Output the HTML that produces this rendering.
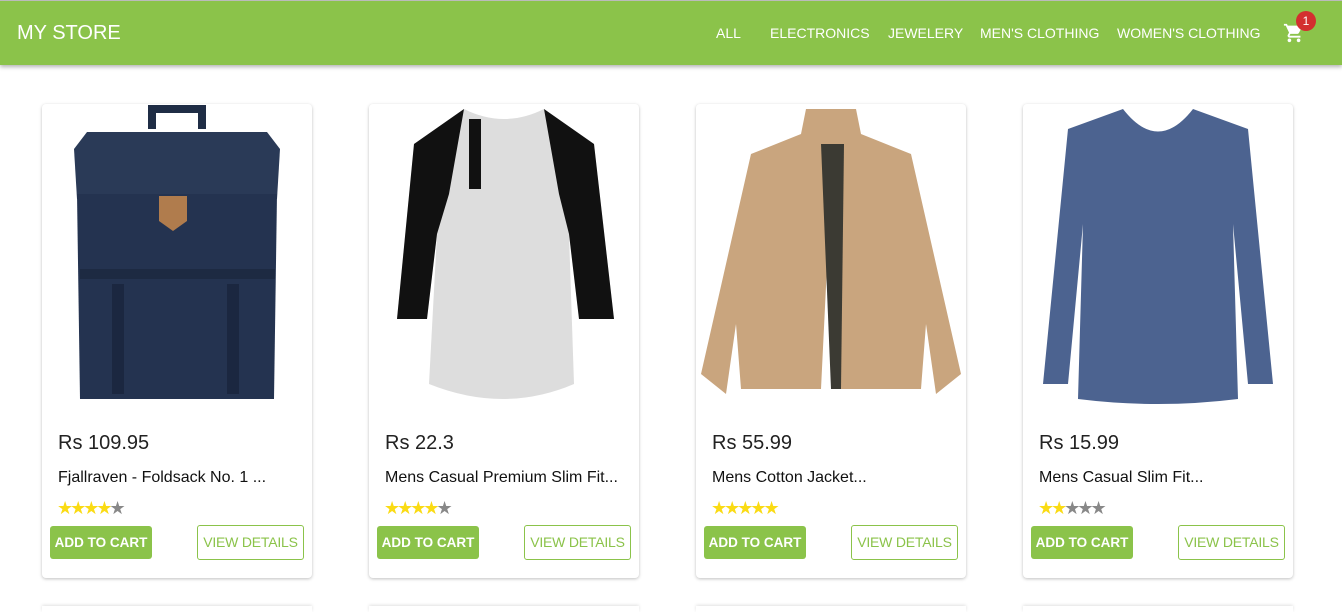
<!DOCTYPE html>
<html><head><style>
*{box-sizing:border-box;margin:0;padding:0}
body{width:1342px;height:609px;overflow:hidden;background:#fff;font-family:"Liberation Sans",Arial,sans-serif;position:relative}
.hdr{position:absolute;left:0;top:0;width:1342px;height:65px;background:#8bc34a;box-shadow:0 2px 4px rgba(0,0,0,.3);border-top:1px solid #bbb}
.logo{position:absolute;left:17px;top:22px;color:#fff;font-size:20px}
.nav{position:absolute;top:25px;color:#fff;font-size:14px}
.cart{position:absolute;left:1283px;top:22px}
.badge{position:absolute;left:1296px;top:11px;width:20px;height:20px;border-radius:50%;background:#d32f2f;color:#fff;font-size:12px;text-align:center;line-height:20px}
.card{position:absolute;top:104px;width:270px;height:474px;background:#fff;border-radius:4px;box-shadow:0 1px 3px rgba(0,0,0,.25)}
.img{position:absolute;left:0;top:0;width:270px;height:302px}
.price{position:absolute;left:16px;top:328px;font-size:20px;color:#222}
.title{position:absolute;left:16px;top:365px;font-size:16px;color:#111}
.stars{position:absolute;left:15px;top:394px;font-size:18px;letter-spacing:-3px}
.y{color:#fadb14}.g{color:#888}
.add{position:absolute;left:8px;top:422px;width:102px;height:33px;background:#8bc34a;color:#fff;font-weight:bold;font-size:13.5px;border-radius:3px;text-align:center;line-height:33px}
.view{position:absolute;left:155px;top:421px;width:107px;height:35px;border:1px solid #8bc34a;color:#8bc34a;font-size:14px;border-radius:3px;text-align:center;line-height:33px;letter-spacing:-.2px}
.next{position:absolute;top:606px;width:270px;height:6px;box-shadow:0 -1px 3px rgba(0,0,0,.12)}
</style></head><body>
<div class="hdr"></div>
<div class="logo">MY STORE</div>
<div class="nav" style="left:716px">ALL</div>
<div class="nav" style="left:770px">ELECTRONICS</div>
<div class="nav" style="left:888px">JEWELERY</div>
<div class="nav" style="left:980px">MEN'S CLOTHING</div>
<div class="nav" style="left:1117px">WOMEN'S CLOTHING</div>
<svg class="cart" width="22" height="22" viewBox="0 0 24 24"><path fill="#fff" d="M7 18c-1.1 0-2 .9-2 2s.9 2 2 2 2-.9 2-2-.9-2-2-2zM1 2v2h2l3.6 7.590-1.35 2.45C5.09 14.32 5 14.65 5 15c0 1.1.9 2 2 2h12v-2H7.42c-.14 0-.25-.11-.25-.25l.03-.12.9-1.630h7.45c.75 0 1.41-.41 1.75-1.030l3.58-6.49A1 1 0 0 0 20 4H5.21l-.94-2H1zm16 16c-1.1 0-2 .9-2 2s.9 2 2 2 2-.9 2-2-.9-2-2-2z"/></svg>
<div class="badge">1</div>

<div class="card" style="left:42px">
<svg class="img" viewBox="0 0 270 302"><path d="M110 25 V5 h50 v20" fill="none" stroke="#1f2d45" stroke-width="8"/><path d="M32 45 L45 28 H225 L238 45 L235 95 H35Z" fill="#2a3a57"/><path d="M35 90 H235 L232 295 H38Z" fill="#243350"/><rect x="38" y="165" width="195" height="10" fill="#1d2a42"/><rect x="70" y="180" width="12" height="110" fill="#1b2740"/><rect x="185" y="180" width="12" height="110" fill="#1b2740"/><path d="M117 92 h28 v25 l-14 10 -14 -10z" fill="#b07c4d"/></svg>
<div class="price">Rs 109.95</div><div class="title">Fjallraven - Foldsack No. 1 ...</div>
<div class="stars"><span class="y">★★★★</span><span class="g">★</span></div>
<div class="add">ADD TO CART</div><div class="view">VIEW DETAILS</div></div>

<div class="card" style="left:369px">
<svg class="img" viewBox="0 0 270 302"><path d="M95 5 Q135 25 175 5 L225 40 L245 215 H210 L200 130 L205 280 Q135 310 60 280 L68 130 L58 215 H28 L45 40Z" fill="#ddd"/><path d="M95 5 L45 40 L28 215 H58 L68 130 L80 90Z" fill="#111"/><path d="M175 5 L225 40 L245 215 H210 L200 130 L190 90Z" fill="#111"/><rect x="100" y="15" width="12" height="70" fill="#111"/></svg>
<div class="price">Rs 22.3</div><div class="title">Mens Casual Premium Slim Fit...</div>
<div class="stars"><span class="y">★★★★</span><span class="g">★</span></div>
<div class="add">ADD TO CART</div><div class="view">VIEW DETAILS</div></div>

<div class="card" style="left:696px">
<svg class="img" viewBox="0 0 270 302"><path d="M110 5 H160 L165 30 L215 50 L265 270 L240 290 L230 220 L225 285 H145 L135 80 L125 285 H45 L40 220 L30 290 L5 270 L55 50 L105 30Z" fill="#c9a57e"/><path d="M125 40 L135 285 H145 L148 40Z" fill="#3b3a33"/></svg>
<div class="price">Rs 55.99</div><div class="title">Mens Cotton Jacket...</div>
<div class="stars"><span class="y">★★★★★</span></div>
<div class="add">ADD TO CART</div><div class="view">VIEW DETAILS</div></div>

<div class="card" style="left:1023px">
<svg class="img" viewBox="0 0 270 302"><path d="M100 5 Q135 50 170 5 L225 25 L250 280 H225 L210 120 L215 295 Q135 305 55 295 L60 120 L45 280 H20 L45 25Z" fill="#4c6390"/></svg>
<div class="price">Rs 15.99</div><div class="title">Mens Casual Slim Fit...</div>
<div class="stars"><span class="y">★★</span><span class="g">★★★</span></div>
<div class="add">ADD TO CART</div><div class="view">VIEW DETAILS</div></div>

<div class="next" style="left:42px"></div><div class="next" style="left:369px"></div><div class="next" style="left:696px"></div><div class="next" style="left:1023px"></div>
</body></html>
